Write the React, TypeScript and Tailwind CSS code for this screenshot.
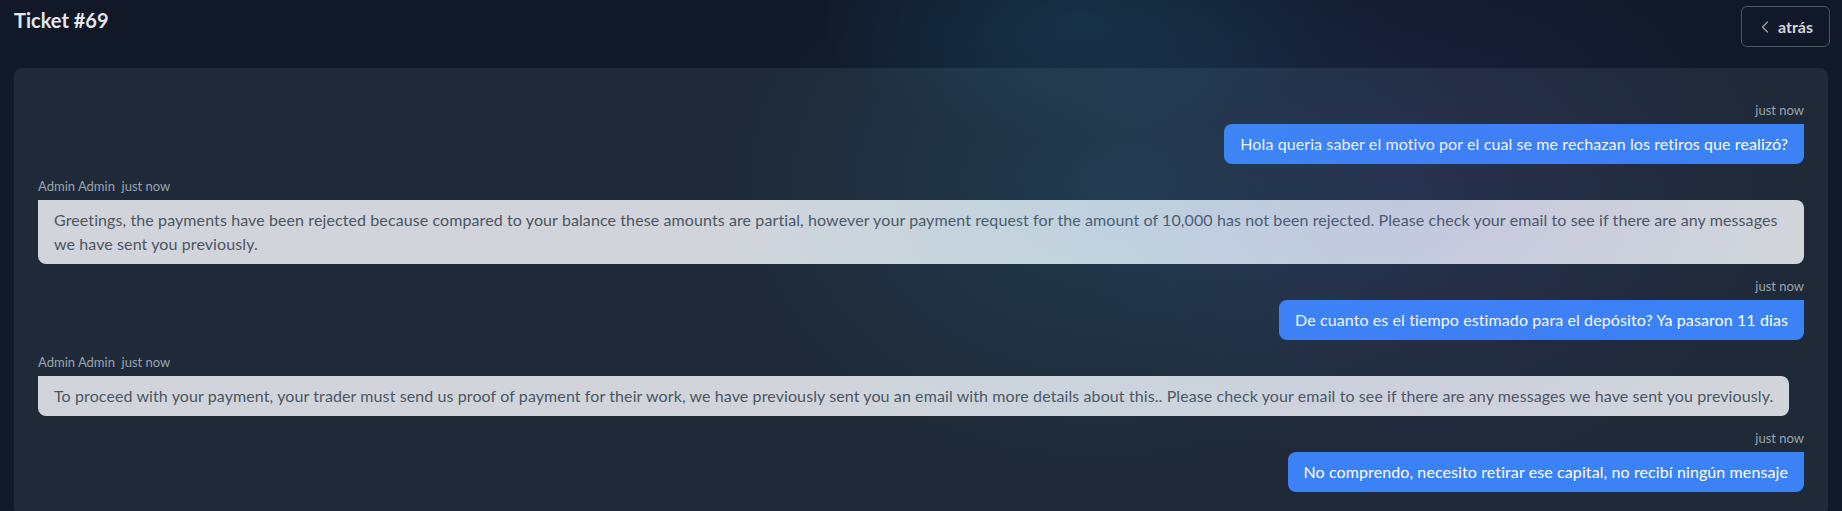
import React from 'react';
import { ChevronLeft } from 'lucide-react';

interface Message {
    id: number;
    fromAdmin: boolean;
    author?: string;
    time: string;
    text: string;
}

const messages: Message[] = [
    { id: 1, fromAdmin: false, time: 'just now', text: 'Hola queria saber el motivo por el cual se me rechazan los retiros que realizó?' },
    {
        id: 2,
        fromAdmin: true,
        author: 'Admin Admin',
        time: 'just now',
        text: 'Greetings, the payments have been rejected because compared to your balance these amounts are partial, however your payment request for the amount of 10,000 has not been rejected. Please check your email to see if there are any messages we have sent you previously.',
    },
    { id: 3, fromAdmin: false, time: 'just now', text: 'De cuanto es el tiempo estimado para el depósito? Ya pasaron 11 dias' },
    {
        id: 4,
        fromAdmin: true,
        author: 'Admin Admin',
        time: 'just now',
        text: 'To proceed with your payment, your trader must send us proof of payment for their work, we have previously sent you an email with more details about this.. Please check your email to see if there are any messages we have sent you previously.',
    },
    { id: 5, fromAdmin: false, time: 'just now', text: 'No comprendo, necesito retirar ese capital, no recibí ningún mensaje' },
];

const MessageRow: React.FC<{ message: Message }> = ({ message }) => {
    if (message.fromAdmin) {
        return (
            <div className="flex flex-col items-start">
                <div className="text-[13px] leading-4 text-[#9ca3af] mb-1.5 whitespace-pre">
                    {message.author}  {message.time}
                </div>
                <div className="bg-[#d1d5db] text-[#4b5563] text-base leading-6 tracking-[0.1px] px-4 py-2 rounded-lg rounded-tl-none">
                    {message.text}
                </div>
            </div>
        );
    }
    return (
        <div className="flex flex-col items-end">
            <div className="text-[13px] leading-4 text-[#9ca3af] mb-1.5">{message.time}</div>
            <div className="bg-[#3b82f6] text-white text-base leading-6 tracking-[0.1px] px-4 py-2 rounded-lg rounded-tr-none">
                {message.text}
            </div>
        </div>
    );
};

const App: React.FC = () => {
    return (
        <div className="relative min-h-screen overflow-hidden bg-[#111827] font-['Lato','Open_Sans',sans-serif]">
            {/* soft glow laid over the page */}
            <div className="pointer-events-none absolute inset-0 z-10 bg-[radial-gradient(ellipse_260px_120px_at_1080px_20px,rgba(56,189,248,0.10),transparent),radial-gradient(ellipse_380px_300px_at_1100px_180px,rgba(56,189,248,0.12),transparent),radial-gradient(ellipse_360px_300px_at_1420px_190px,rgba(99,102,241,0.12),transparent)]" />

            <div className="flex items-start justify-between pl-[14px] pr-3 pt-[6px]">
                <h1 className="text-xl leading-7 font-bold text-[#e5e7eb]">Ticket #69</h1>
                <button className="flex items-center gap-[3px] h-[41px] pl-[13px] pr-4 border border-[#4b5563] rounded-md text-base font-bold text-[#d1d5db]">
                    <ChevronLeft size={20} strokeWidth={1.5} className="text-[#9ca3af]" />
                    atrás
                </button>
            </div>

            <div className="mx-[14px] mt-[21px] bg-[#1f2937] rounded-lg px-6 pt-[34px] pb-6">
                <div className="flex flex-col gap-3.5">
                    {messages.map(message => (
                        <MessageRow key={message.id} message={message} />
                    ))}
                </div>
            </div>
        </div>
    );
};

export default App;
